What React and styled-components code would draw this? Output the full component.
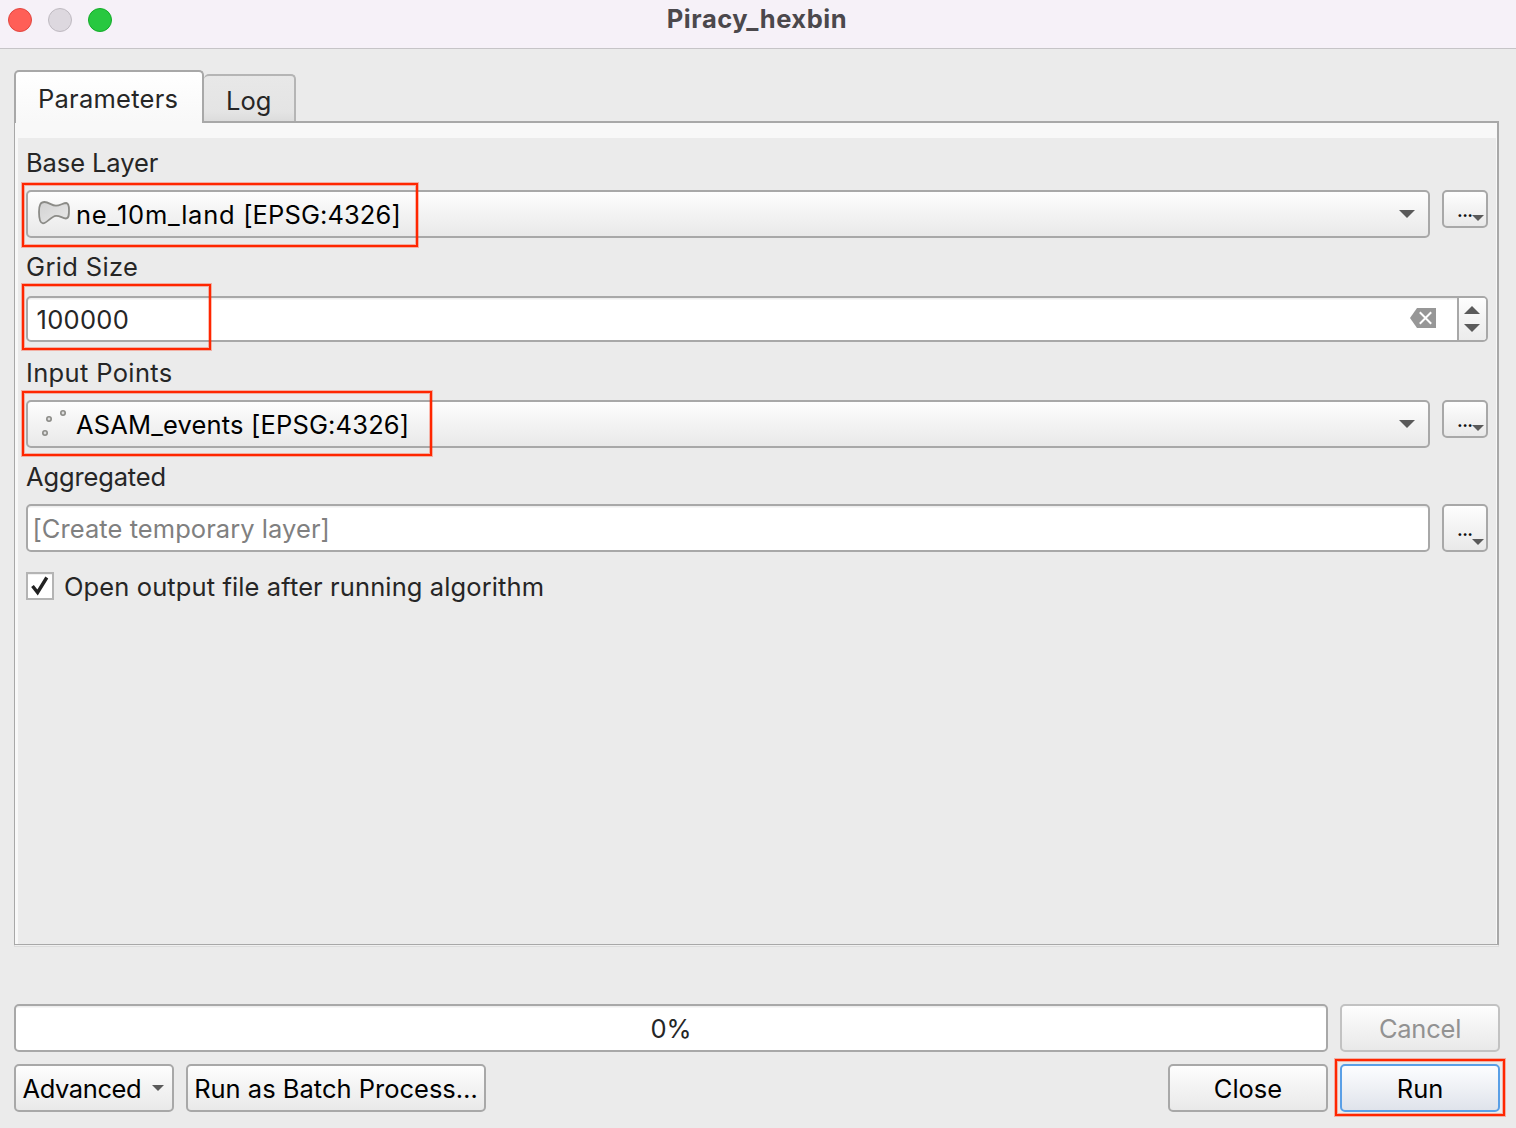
import React from "react";
import styled, { createGlobalStyle } from "styled-components";

const GlobalStyle = createGlobalStyle`
  *, *::before, *::after { box-sizing: border-box; }
  body {
    margin: 0;
    background: #ebebeb;
    font-family: Inter, "Liberation Sans", sans-serif;
    font-size: 25.5px;
    color: #262626;
  }
  svg { display: block; flex: none; }
`;

const Window = styled.main`
  display: flex;
  flex-direction: column;
  width: 1516px;
  height: 1128px;
  overflow: hidden;
  background: #ebebeb;
`;

const TitleBar = styled.header`
  display: grid;
  grid-template-columns: 1fr auto 1fr;
  height: 49px;
  padding: 0 8px;
  background: #f6f1f8;
  border-bottom: 1px solid #c6c4c7;
`;

const Lights = styled.div`
  display: flex;
  gap: 16px;
  padding-top: 8px;
`;

const Light = styled.span`
  width: 24px;
  height: 24px;
  border-radius: 50%;
  background: ${(p) => p.$fill};
  border: 1px solid ${(p) => p.$edge};
`;

const Title = styled.h1`
  margin: 0;
  padding-right: 2px;
  font-size: 25.5px;
  font-weight: 700;
  line-height: 38px;
  letter-spacing: 0.54px;
  color: #4b484c;
`;

const Text = styled.span`
  white-space: pre;
  line-height: 30px;
  letter-spacing: ${(p) => p.$track || 0}px;
`;

const Tabs = styled.nav`
  display: flex;
  align-items: flex-end;
  height: 74px;
  padding-left: 14px;
  margin-bottom: -2px;
  position: relative;
  z-index: 1;
`;

const ActiveTab = styled.div`
  display: flex;
  width: 190px;
  height: 53px;
  padding: 12px 0 0 22px;
  border: 2px solid #a8a8a8;
  border-bottom: 0;
  border-radius: 5px 5px 0 0;
  background: linear-gradient(#ffffff, #f8f8f8);
`;

const IdleTab = styled.div`
  display: flex;
  width: 92px;
  height: 47px;
  margin-bottom: 2px;
  padding: 10px 0 0 22px;
  border: 2px solid #b5b5b5;
  border-width: 2px 2px 0 0;
  border-radius: 5px 5px 0 0;
  background: linear-gradient(#e8e8e8, #e4e4e4 80%, #dcdcdc);
`;

const Pane = styled.section`
  width: 1485px;
  height: 824px;
  margin-left: 14px;
  border: 1px solid #a8a8a8;
  border-top-width: 2px;
  border-right-width: 2px;
  background: #f8f8f8;
  padding: 15px 1px 0 3px;
  box-shadow: 0 2px 0 -1px #f0f0f0, 0 2px 0 0 #dcdcdc;
`;

const Form = styled.div`
  display: flex;
  flex-direction: column;
  height: 806px;
  padding: 0 8px;
  background: #ebebeb;
`;

const Label = styled.label`
  display: flex;
  align-items: center;
  height: ${(p) => p.$height}px;
  padding-top: ${(p) => p.$drop || 0}px;
  padding-bottom: ${(p) => p.$lift || 0}px;
`;

const FieldRow = styled.div`
  position: relative;
  display: flex;
  align-items: flex-start;
  gap: 12px;
`;

const raised = `
  border: 2px solid #a8a8a8;
  border-radius: 5px;
  background: linear-gradient(#fefefe, #f4f4f4 45%, #e9e9e9);
`;

const Combo = styled.div`
  ${raised}
  display: flex;
  align-items: center;
  width: 1404px;
  height: 48px;
  padding: 0 13px 0 10px;
  color: #000;
`;

const ComboValue = styled.div`
  display: flex;
  flex: 1;
  margin-left: 6px;
  padding-top: 1px;
`;

const MoreButton = styled.button`
  ${raised}
  display: flex;
  align-items: flex-end;
  width: 46px;
  height: ${(p) => (p.$tall ? 48 : 38)}px;
  padding: 0 3px 5px 13px;
  font: 600 18px Inter, "Liberation Sans", sans-serif;
  color: #111;
`;

const Dots = styled.span`
  width: 14.5px;
  margin-bottom: ${(p) => (p.$tall ? 8 : 3)}px;
  line-height: 14px;
  letter-spacing: -0.6px;
`;

const Input = styled.div`
  display: flex;
  align-items: center;
  flex: ${(p) => (p.$grow ? 1 : "none")};
  width: ${(p) => p.$width}px;
  height: ${(p) => p.$height}px;
  padding-left: ${(p) => p.$inset}px;
  border: 2px solid #a8a8a8;
  border-radius: 5px;
  background: #fff;
  box-shadow: inset 0 2px 0 -0.5px #eeeeee;
  color: ${(p) => p.$color || "#262626"};
  & > ${Text} { padding-top: 2px; }
`;

const Spacer = styled.div`
  flex: 1;
`;

const ClearButton = styled.span`
  padding-bottom: 2px;
`;

const Stepper = styled.div`
  display: flex;
  flex-direction: column;
  align-items: center;
  gap: 10px;
  width: 29px;
  height: 42px;
  margin-left: 21px;
  padding: 8px 1px 0 0;
  border-left: 2px solid #a8a8a8;
  border-radius: 0 3px 3px 0;
  background: linear-gradient(#fefefe, #f4f4f4 45%, #ececec);
`;

const CheckRow = styled.label`
  display: flex;
  align-items: center;
  height: 28px;
  margin-top: 20px;
  gap: 10px;
  & > ${Text} { padding-top: 2px; }
`;

const CheckBox = styled.span`
  display: grid;
  place-items: center;
  width: 28px;
  height: 28px;
  border: 2px solid #b4b4b4;
  background: #fff;
  box-shadow: inset 0 2px 0 -1px #f0f0f0;
`;

const Highlight = styled.i`
  position: absolute;
  left: ${(p) => p.$left}px;
  top: ${(p) => p.$top}px;
  width: ${(p) => p.$width}px;
  height: ${(p) => p.$height}px;
  border: 2px solid #ff2600;
  box-shadow: 0 0 0 1px rgba(255, 38, 0, 0.3), inset 0 0 0 1px rgba(255, 38, 0, 0.3);
  pointer-events: none;
`;

const Footer = styled.footer`
  display: flex;
  flex-direction: column;
  gap: 12px;
  padding: 59px 16px 0 14px;
`;

const FooterRow = styled.div`
  display: flex;
  gap: 12px;
`;

const Progress = styled(Input)`
  justify-content: center;
`;

const PushButton = styled.button`
  ${raised}
  display: flex;
  align-items: center;
  justify-content: center;
  width: ${(p) => p.$width}px;
  height: 48px;
  padding: 2px 0 0;
  font: inherit;
  color: #000;
  &:disabled {
    color: #929292;
    border-color: #c2c2c2;
  }
`;

const MenuButton = styled(PushButton)`
  justify-content: flex-start;
  gap: 11px;
  padding: 2px 0 0 6.5px;
  & > svg { margin-top: -3px; }
`;

const PrimaryButton = styled(PushButton)`
  border-color: #5a9fe6;
  background: linear-gradient(#fcfdff, #f0f2f6 45%, #dfe3eb);
`;

const ButtonSlot = styled.div`
  position: relative;
`;

const Arrow = ({ w = 16, h = 8, up }) => (
  <svg width={w} height={h} viewBox="0 0 16 8" preserveAspectRatio="none">
    <path d={up ? "M0 8H16L8 0Z" : "M0 0H16L8 8Z"} fill="#5a5a5a" />
  </svg>
);

const PolygonIcon = () => (
  <svg width="32" height="28" viewBox="0 0 32 28">
    <defs>
      <linearGradient id="land" x1="0" y1="0" x2="1" y2="1">
        <stop offset="0" stopColor="#d2d2d2" />
        <stop offset="1" stopColor="#e9e9e9" />
      </linearGradient>
    </defs>
    <path
      d="M1 12C1 5 2.500 2 6.500 2C11 2 13.500 5.700 18 5.700C22 5.700 25 3 28.300 3C30.800 3.300 31 6 31 10C31 15 31 18.500 28 18.500C24.500 18.500 22 15.500 18 15.800C13 16.200 9 23.300 5 23.300C1.500 23 1 18 1 12Z"
      fill="url(#land)"
      stroke="#8b8b87"
      strokeWidth="1.8"
    />
  </svg>
);

const PointsIcon = () => (
  <svg width="32" height="32" viewBox="0 0 32 32" fill="#dcdcdc" stroke="#8b8b87" strokeWidth="1.6">
    <circle cx="11" cy="11" r="2.200" />
    <circle cx="25" cy="5" r="2.200" />
    <circle cx="7" cy="25" r="2.200" />
  </svg>
);

const ClearIcon = () => (
  <svg width="26" height="20" viewBox="0 0 26 20">
    <path d="M0 10L7 0H26V20H7Z" fill="#979797" />
    <path d="M9.800 4.300L21.200 15.700M21.200 4.300L9.800 15.700" stroke="#fff" strokeWidth="2" />
  </svg>
);

const CheckIcon = () => (
  <svg width="20" height="22" viewBox="0 0 20 22">
    <path d="M2.500 11L7.600 17.500L16.800 2.500" fill="none" stroke="#222" strokeWidth="3.400" />
  </svg>
);

const More = ({ tall }) => (
  <MoreButton $tall={tall}>
    <Dots $tall={tall}>...</Dots>
    <Arrow w={12} h={6} />
  </MoreButton>
);

export default function App() {
  return (
    <Window>
      <GlobalStyle />
      <TitleBar>
        <Lights>
          <Light $fill="#ff5f57" $edge="#e2463f" />
          <Light $fill="#ddd8df" $edge="#bfbac1" />
          <Light $fill="#28c840" $edge="#12ac28" />
        </Lights>
        <Title>Piracy_hexbin</Title>
      </TitleBar>

      <Tabs>
        <ActiveTab>
          <Text $track={0.25}>Parameters</Text>
        </ActiveTab>
        <IdleTab>
          <Text $track={0}>Log</Text>
        </IdleTab>
      </Tabs>

      <Pane>
        <Form>
          <Label $height={52} $lift={2}>
            <Text $track={-0.1}>Base Layer</Text>
          </Label>
          <FieldRow>
            <Combo>
              <PolygonIcon />
              <ComboValue>
                <Text $track={0.73}>ne_10m_land </Text>
                <Text $track={0.1}>[EPSG:4326]</Text>
              </ComboValue>
              <Arrow />
            </Combo>
            <More />
            <Highlight $left={-4} $top={-7} $width={396} $height={64} />
          </FieldRow>

          <Label $height={58}>
            <Text $track={0.36}>Grid Size</Text>
          </Label>
          <FieldRow>
            <Input $width={1462} $height={46} $inset={8.5}>
              <Text $track={0.3}>100000</Text>
              <Spacer />
              <ClearButton>
                <ClearIcon />
              </ClearButton>
              <Stepper>
                <Arrow up />
                <Arrow />
              </Stepper>
            </Input>
            <Highlight $left={-4} $top={-12} $width={189} $height={66} />
          </FieldRow>

          <Label $height={58} $drop={4}>
            <Text $track={0.35}>Input Points</Text>
          </Label>
          <FieldRow>
            <Combo>
              <PointsIcon />
              <ComboValue>
                <Text $track={0.16}>ASAM_events [EPSG:4326]</Text>
              </ComboValue>
              <Arrow />
            </Combo>
            <More />
            <Highlight $left={-4} $top={-9} $width={410} $height={65} />
          </FieldRow>

          <Label $height={56} $drop={2}>
            <Text $track={-0.15}>Aggregated</Text>
          </Label>
          <FieldRow>
            <Input $width={1404} $height={48} $inset={4.5} $color="#808080">
              <Text $track={0.06}>[Create temporary layer]</Text>
            </Input>
            <More tall />
          </FieldRow>

          <CheckRow>
            <CheckBox>
              <CheckIcon />
            </CheckBox>
            <Text $track={0.11}>Open output file after running algorithm</Text>
          </CheckRow>
        </Form>
      </Pane>

      <Footer>
        <FooterRow>
          <Progress $grow $height={48} $inset={0}>
            <Text>0%</Text>
          </Progress>
          <PushButton $width={160} disabled>
            <Text $track={-0.23}>Cancel</Text>
          </PushButton>
        </FooterRow>
        <FooterRow>
          <MenuButton $width={160}>
            <Text $track={-0.4}>Advanced</Text>
            <Arrow w={12} h={6} />
          </MenuButton>
          <PushButton $width={300}>
            <Text>Run as Batch Process…</Text>
          </PushButton>
          <Spacer />
          <PushButton $width={160}>
            <Text>Close</Text>
          </PushButton>
          <ButtonSlot>
            <PrimaryButton $width={160}>
              <Text>Run</Text>
            </PrimaryButton>
            <Highlight $left={-5} $top={-5} $width={170} $height={57} />
          </ButtonSlot>
        </FooterRow>
      </Footer>
    </Window>
  );
}
